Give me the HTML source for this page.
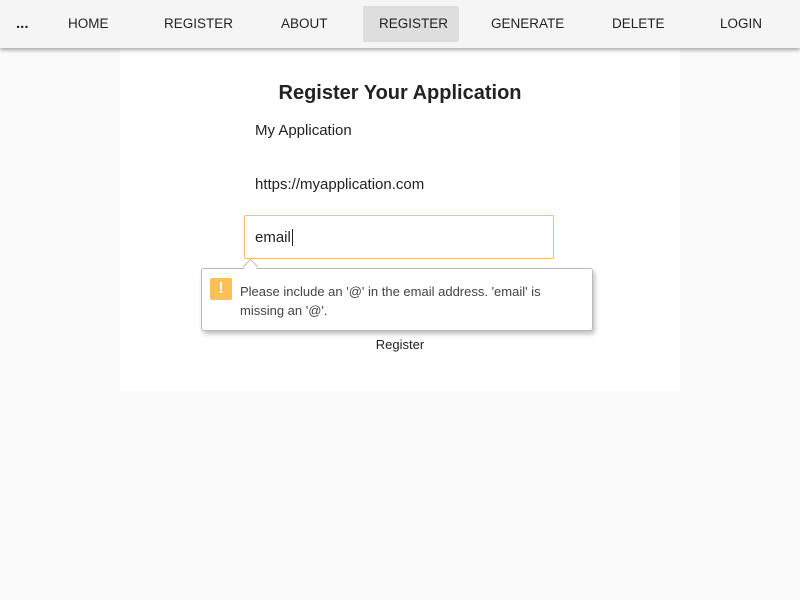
<!DOCTYPE html>
<html><head><style>
body{margin:0;width:800px;height:600px;background:#fafafa;font-family:"Liberation Sans",sans-serif;position:relative;overflow:hidden;color:#222}
.nav{position:absolute;top:0;left:0;width:800px;height:48px;background:#f5f5f5;box-shadow:0 2px 4px rgba(0,0,0,.35);z-index:2}
.nav span{position:absolute;top:16px;font-size:13.5px;color:#222}
.sel{position:absolute;left:363px;top:6px;width:96px;height:36px;background:#dedede;border-radius:2px}
.card{position:absolute;left:120px;top:48px;width:560px;height:343px;background:#fff}
.t{position:absolute;text-align:center;width:800px;top:82px;font-size:20px;font-weight:bold;left:0}
.f{position:absolute;left:255px;font-size:15px}
.inp{position:absolute;left:244px;top:215px;width:308px;height:42px;border:1.5px solid #f2c26a;border-radius:2px;background:#fff}
.tip{position:absolute;left:201px;top:268px;width:390px;height:61px;background:#fff;border:1px solid #bbb;border-radius:3px;box-shadow:2px 3px 5px rgba(0,0,0,.25);z-index:3}
.arr{position:absolute;left:245px;top:261px;width:10px;height:10px;background:#fff;border-left:1px solid #bbb;border-top:1px solid #bbb;transform:rotate(45deg);z-index:4}
.ic{position:absolute;left:8px;top:9px;width:22px;height:22px;background:#fbc05a;border-radius:2px;color:#fff;font-weight:bold;text-align:center;font-size:16px;line-height:22px}
.msg{position:absolute;left:38px;top:13px;font-size:13px;color:#444;line-height:19px;width:340px}
</style></head><body>
<div class="nav"><div class="sel"></div>
<span style="left:16px;top:15px;font-weight:bold;font-size:15px">...</span>
<span style="left:68px">HOME</span><span style="left:164px">REGISTER</span><span style="left:281px">ABOUT</span><span style="left:379px">REGISTER</span><span style="left:491px">GENERATE</span><span style="left:612px">DELETE</span><span style="left:720px">LOGIN</span></div>
<div class="card"></div>
<div class="t">Register Your Application</div>
<div class="f" style="top:122px">My Application</div>
<div class="f" style="top:176px">https://myapplication.com</div>
<div class="inp"><span style="position:absolute;left:10px;top:13px;font-size:15px">email<span style="border-left:1px solid #222;margin-left:1px"></span></span></div>
<div class="arr"></div>
<div class="tip"><div class="ic">!</div><div class="msg">Please include an '@' in the email address. 'email' is missing an '@'.</div></div>
<div style="position:absolute;left:0;width:800px;text-align:center;top:337px;font-size:13px">Register</div>
</body></html>
